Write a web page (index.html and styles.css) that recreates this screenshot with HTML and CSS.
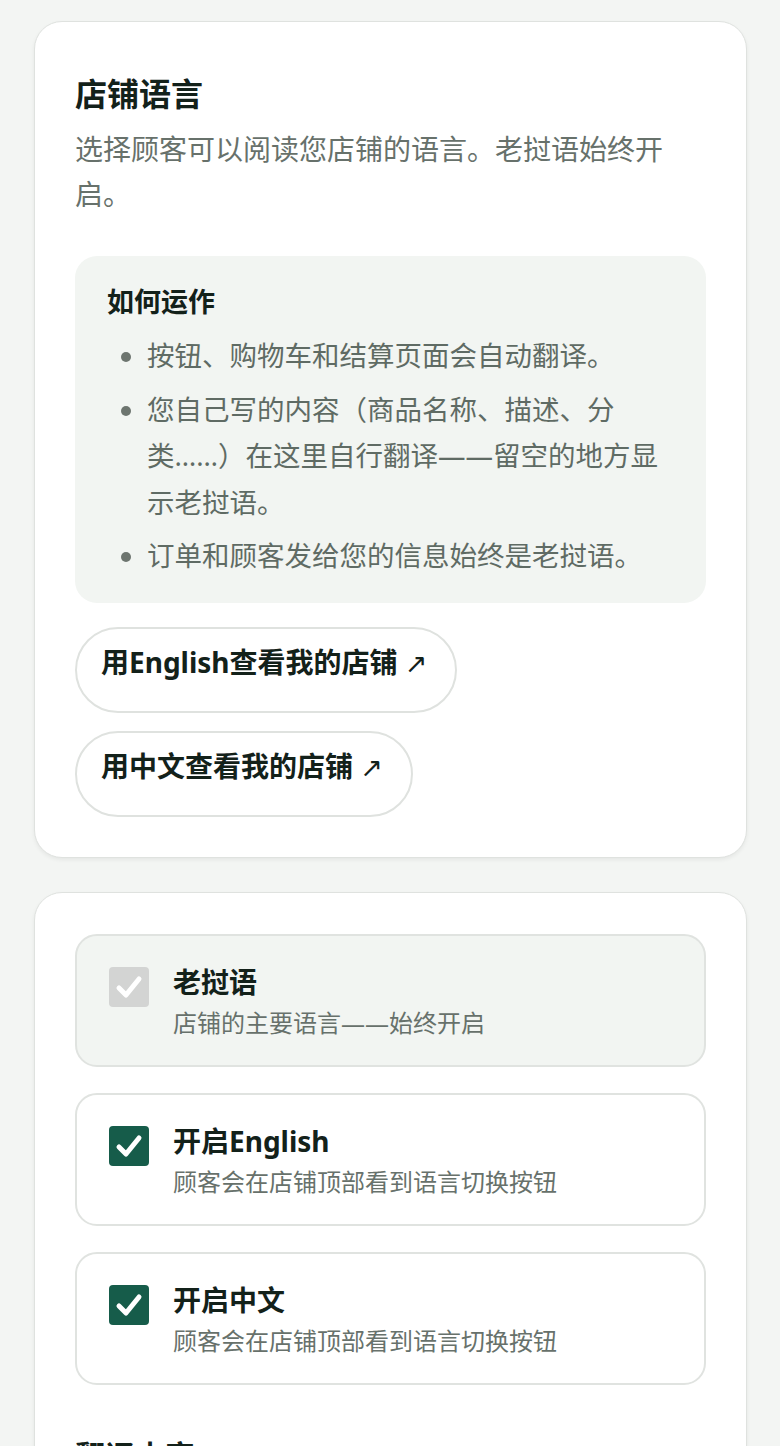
FILE: index.html
```html
<!DOCTYPE html>
<html lang="zh">
<head>
<meta charset="utf-8">
<title>店铺语言</title>
<link rel="stylesheet" href="styles.css">
</head>
<body>
<div class="page">
  <section class="card">
    <h2 class="title">店铺语言</h2>
    <p class="subtitle">选择顾客可以阅读您店铺的语言。老挝语始终开启。</p>
    <div class="info">
      <h3 class="info-title">如何运作</h3>
      <ul class="info-list">
        <li>按钮、购物车和结算页面会自动翻译。</li>
        <li>您自己写的内容（商品名称、描述、分类……）在这里自行翻译——留空的地方显示老挝语。</li>
        <li>订单和顾客发给您的信息始终是老挝语。</li>
      </ul>
    </div>
    <div class="links">
      <a class="pill" href="#">用English查看我的店铺 <span class="arrow">↗</span></a>
      <a class="pill" href="#">用中文查看我的店铺 <span class="arrow">↗</span></a>
    </div>
  </section>

  <section class="card card-2">
    <div class="options">
      <label class="option disabled">
        <span class="check grey"><svg viewBox="0 0 40 40"><path d="M10 21 L17 28 L30 12" fill="none" stroke="#fff" stroke-width="5" stroke-linecap="round" stroke-linejoin="round"/></svg></span>
        <span class="opt-text">
          <span class="opt-title">老挝语</span>
          <span class="opt-desc">店铺的主要语言——始终开启</span>
        </span>
      </label>
      <label class="option">
        <span class="check"><svg viewBox="0 0 40 40"><path d="M10 21 L17 28 L30 12" fill="none" stroke="#fff" stroke-width="5" stroke-linecap="round" stroke-linejoin="round"/></svg></span>
        <span class="opt-text">
          <span class="opt-title">开启English</span>
          <span class="opt-desc">顾客会在店铺顶部看到语言切换按钮</span>
        </span>
      </label>
      <label class="option">
        <span class="check"><svg viewBox="0 0 40 40"><path d="M10 21 L17 28 L30 12" fill="none" stroke="#fff" stroke-width="5" stroke-linecap="round" stroke-linejoin="round"/></svg></span>
        <span class="opt-text">
          <span class="opt-title">开启中文</span>
          <span class="opt-desc">顾客会在店铺顶部看到语言切换按钮</span>
        </span>
      </label>
    </div>
    <h3 class="section-title">翻译内容</h3>
  </section>
</div>
</body>
</html>
```

FILE: styles.css
```css
* { box-sizing: border-box; }
html, body {
  margin: 0;
  padding: 0;
  background: #f3f5f3;
}
body {
  font-family: "Noto Sans", "Noto Sans CJK SC", sans-serif;
  color: #13211a;
}
.page {
  padding: 21px 33px 0 34px;
  display: flex;
  flex-direction: column;
  gap: 34px;
}
.card {
  background: #fff;
  border: 1px solid #dfe2df;
  border-radius: 28px;
  box-shadow: 0 2px 4px rgba(0, 0, 0, 0.06);
  padding: 40px;
}
.title {
  margin: 9px 0 0 0;
  font-size: 32px;
  line-height: 46px;
  font-weight: 700;
  color: #13211a;
}
.subtitle {
  margin: 10px 0 0 0;
  font-size: 28px;
  line-height: 45px;
  color: #67716b;
}
.info {
  margin-top: 39px;
  background: #f2f5f2;
  border-radius: 22px;
  padding: 26px 32px 23px 32px;
}
.info-title {
  margin: 0;
  font-size: 27px;
  line-height: 40px;
  font-weight: 700;
  color: #13211a;
}
.info-list {
  margin: 11px 0 0 0;
  padding: 0 0 0 40px;
  font-size: 27.5px;
  line-height: 46.5px;
  color: #5f6b64;
}
.info-list li {
  margin-bottom: 7px;
}
.info-list li:last-child { margin-bottom: 0; }
.info-list li::marker { color: #6d756f; }
.links {
  margin-top: 24px;
  display: flex;
  flex-direction: column;
  align-items: flex-start;
  gap: 18px;
}
.pill {
  display: block;
  height: 86px;
  border: 2px solid #dfe2df;
  border-radius: 999px;
  padding: 12px 28px 0 24px;
  font-size: 28px;
  line-height: 42px;
  font-weight: 700;
  color: #13211a;
  text-decoration: none;
  background: #fff;
}
.arrow {
  font-weight: 400;
  font-family: "DejaVu Sans", sans-serif;
  font-size: 27px;
  line-height: 0;
}
.card-2 {
  padding-top: 41px;
  padding-bottom: 40px;
}
.options {
  display: flex;
  flex-direction: column;
  gap: 26px;
}
.option {
  display: flex;
  align-items: flex-start;
  gap: 24px;
  border: 2px solid #e0e3e0;
  border-radius: 22px;
  padding: 26px 32px 24px 32px;
  background: #fff;
}
.option.disabled {
  background: #f2f5f2;
}
.check {
  flex: none;
  width: 40px;
  height: 40px;
  margin-top: 5px;
  border-radius: 4px;
  background: #165c4a;
  display: flex;
  align-items: center;
  justify-content: center;
}
.check svg { width: 40px; height: 40px; display: block; }
.check.grey { background: #d3d4d3; }
.opt-text {
  display: flex;
  flex-direction: column;
}
.opt-title {
  font-size: 28px;
  line-height: 40px;
  font-weight: 700;
  color: #13211a;
}
.opt-desc {
  margin-top: 3px;
  font-size: 24px;
  line-height: 36px;
  color: #67716b;
}
.section-title {
  margin: 48px 0 0 0;
  font-size: 30px;
  line-height: 46px;
  font-weight: 700;
  color: #13211a;
}
```
